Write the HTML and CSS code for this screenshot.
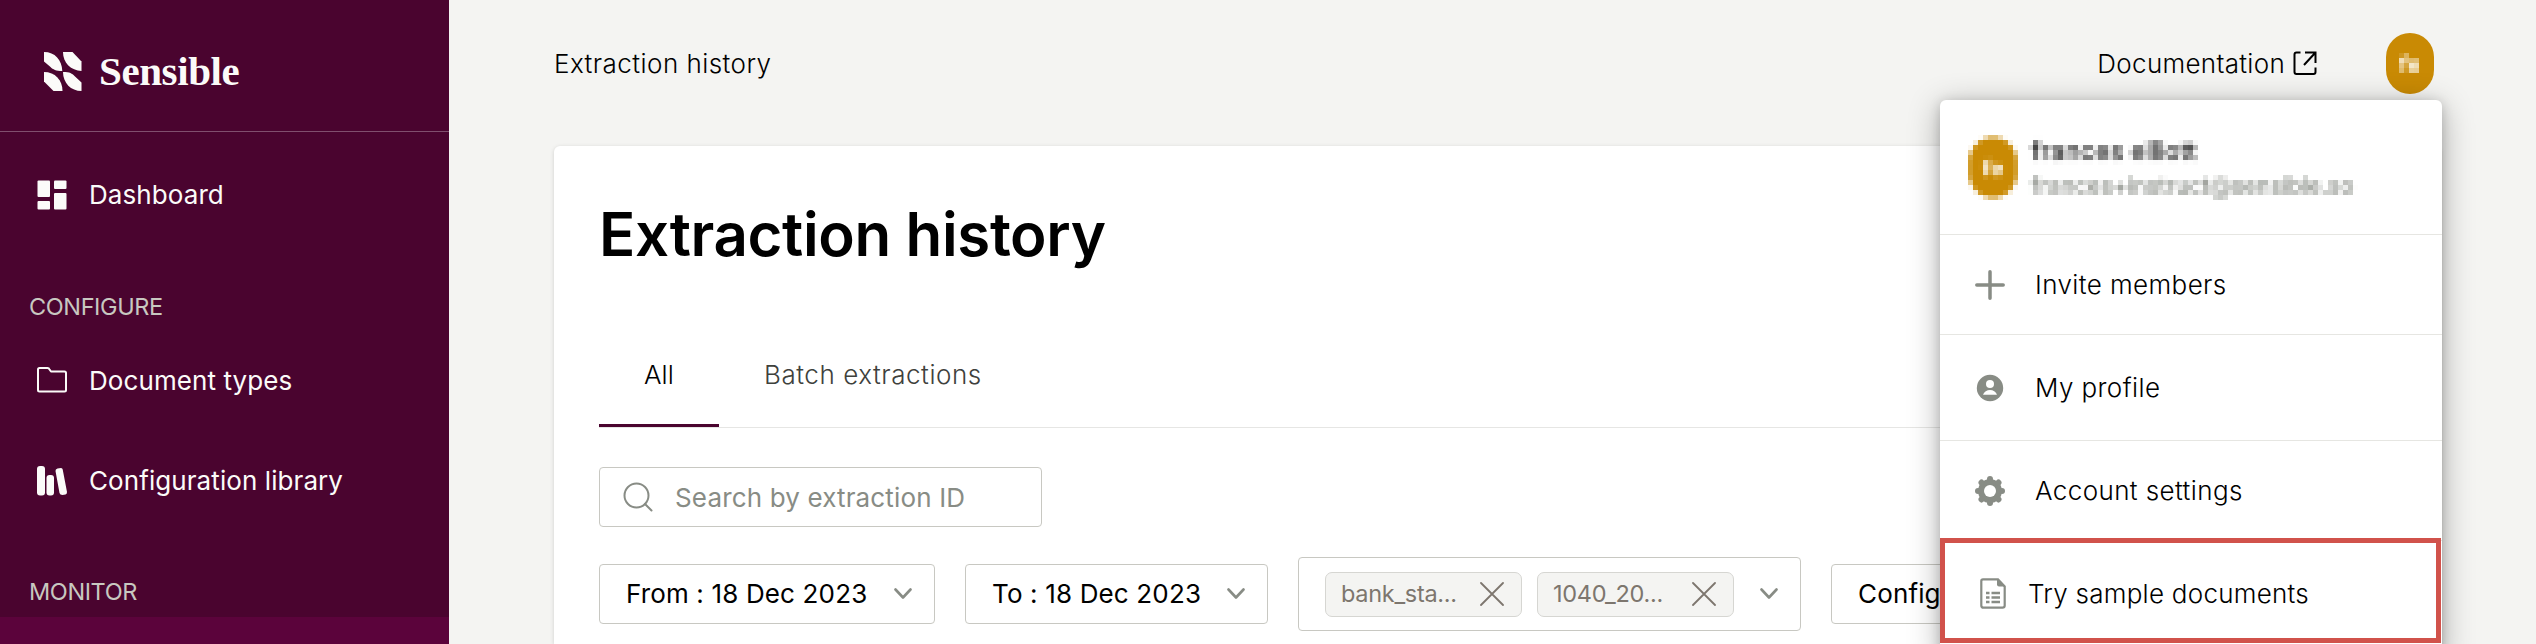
FILE: index.html
```html
<!DOCTYPE html>
<html lang="en">
<head>
<meta charset="utf-8">
<title>Extraction history</title>
<link rel="stylesheet" href="styles.css">
</head>
<body>
<svg class="defs" width="0" height="0" aria-hidden="true">
  <filter id="mosaic" x="0" y="0" width="100%" height="100%" color-interpolation-filters="sRGB">
    <feGaussianBlur in="SourceGraphic" stdDeviation="1.5" result="soft"/>
    <feFlood x="2" y="2" width="1" height="1" flood-color="#000"/>
    <feComposite width="5" height="5"/>
    <feTile result="grid"/>
    <feComposite in="soft" in2="grid" operator="in"/>
    <feMorphology operator="dilate" radius="2"/>
  </filter>
</svg>
<div class="app">
  <aside class="sidebar">
    <div class="brand">
      <svg class="brand-mark" width="38" height="39" viewBox="0 0 38 39" fill="#fbfbf9">
        <path d="M0 0C11 0 18 8 18.300 19C12 19 9 17.500 6.500 15L0 9.500Z"/>
        <path d="M19 0H28.500L37.500 9.500V19C27 18.500 19 11 19 0Z"/>
        <path d="M0 20C11 20 18.500 28 18.500 39H9.500L0 29.500Z"/>
        <path d="M19 20C26 20 28 21.500 30.500 24L37.500 30.500V39C27 39 19 31 19 20Z"/>
      </svg>
      <span class="brand-name">Sensible</span>
    </div>
    <nav class="nav">
      <a class="nav-item first">
        <svg width="30" height="30" viewBox="0 0 30 30" fill="#fbfbf9"><rect x=".5" y=".5" width="12.500" height="16.500" rx="1"/><rect x="17" y=".5" width="12.500" height="8.500" rx="1"/><rect x=".5" y="21" width="12.500" height="8.500" rx="1"/><rect x="17" y="13" width="12.500" height="16.500" rx="1"/></svg>
        <span>Dashboard</span>
      </a>
      <div class="nav-group configure">CONFIGURE</div>
      <a class="nav-item">
        <svg width="30" height="30" viewBox="0 0 30 30" fill="none" stroke="#fbfbf9" stroke-width="2" stroke-linejoin="round"><path d="M1 3.500Q1 2 2.500 2H10.500Q12 2 12.500 3.500L14 5.500H27.500Q29 5.500 29 7V24Q29 25.500 27.500 25.500H2.500Q1 25.500 1 24Z"/></svg>
        <span>Document types</span>
      </a>
      <a class="nav-item">
        <svg width="30" height="30" viewBox="0 0 30 30" fill="#fbfbf9"><rect x="0" y="0" width="8" height="29.500" rx="3"/><rect x="9.500" y="9" width="7.500" height="20.500" rx="3"/><path d="M20.500 2.500L24 2Q25.500 2 25.700 3.500L30 26Q30 28 28.500 28.500L25.500 29Q23 29 22.500 27L18.500 5Q18.300 3 20.500 2.500Z"/></svg>
        <span>Configuration library</span>
      </a>
      <div class="nav-group monitor">MONITOR</div>
      <div class="nav-active"></div>
    </nav>
  </aside>

  <main class="main">
    <header class="topbar">
      <span class="crumb">Extraction history</span>
      <a class="docs">Documentation</a>
      <svg class="ext" width="24" height="24" viewBox="0 0 24 24" fill="none" stroke="#000" stroke-width="2"><path d="M7.500 1.500H3.500Q1.500 1.500 1.500 3.500V21Q1.500 23 3.500 23H20.500Q22.500 23 22.500 21V16.500M12 1.500H22.500V12M22.500 1.500L11 14"/></svg>
      <div class="avatar"><span class="initials mosaic">fe</span></div>
    </header>
    <section class="card">
      <h1 class="title">Extraction history</h1>
      <div class="tabs">
        <div class="tab active">All</div>
        <div class="tab">Batch extractions</div>
      </div>
      <div class="search">
        <svg width="30" height="30" viewBox="0 0 30 30" fill="none" stroke="#888c85" stroke-width="2" stroke-linecap="round"><circle cx="13.500" cy="13.500" r="12"/><path d="M22 22L28.500 28.500"/></svg>
        <span>Search by extraction ID</span>
      </div>
      <div class="filters">
        <div class="select from"><span>From : 18 Dec 2023</span><svg class="chev" width="18" height="12" viewBox="0 0 18 12"><path d="M1.500 1.500L9 9.500L16.500 1.500"/></svg></div>
        <div class="select to"><span>To : 18 Dec 2023</span><svg class="chev" width="18" height="12" viewBox="0 0 18 12"><path d="M1.500 1.500L9 9.500L16.500 1.500"/></svg></div>
        <div class="select multi">
          <div class="chips">
            <div class="chip"><span>bank_sta...</span><svg class="close" width="24" height="24" viewBox="0 0 24 24"><path d="M1 1L23 23M23 1L1 23"/></svg></div>
            <div class="chip"><span>1040_20...</span><svg class="close" width="24" height="24" viewBox="0 0 24 24"><path d="M1 1L23 23M23 1L1 23"/></svg></div>
          </div>
          <svg class="chev" width="18" height="12" viewBox="0 0 18 12"><path d="M1.500 1.500L9 9.500L16.500 1.500"/></svg>
        </div>
        <div class="select config"><span>Configuration</span></div>
      </div>
    </section>
  </main>

  <div class="menu">
    <div class="profile">
      <div class="avatar-box mosaic"><div class="avatar small">fe</div></div>
      <div class="who">
        <div class="name mosaic">frances elliott</div>
        <div class="email mosaic">frances+instruct@sensible.so</div>
      </div>
    </div>
    <div class="menu-item invite">
      <svg width="30" height="30" viewBox="0 0 30 30" fill="none" stroke="#888c85" stroke-width="3.500" stroke-linecap="round"><path d="M15 1.800V28.200M1.800 15H28.200"/></svg>
      <span>Invite members</span>
    </div>
    <div class="menu-item me">
      <svg width="30" height="30" viewBox="0 0 30 30"><circle cx="15" cy="15" r="13.200" fill="#888c85"/><circle cx="15" cy="11" r="4" fill="#fff"/><path d="M8 21.800C9 18.500 12 17 15 17S21 18.500 22 21.800Z" fill="#fff"/></svg>
      <span>My profile</span>
    </div>
    <div class="menu-item">
      <svg width="30" height="30" viewBox="0 0 30 30"><g fill="#888c85"><circle cx="15" cy="15" r="12"/><g id="teeth"><circle cx="15" cy="3" r="3"/><circle cx="15" cy="27" r="3"/><circle cx="3" cy="15" r="3"/><circle cx="27" cy="15" r="3"/></g><use href="#teeth" transform="rotate(45 15 15)"/></g><circle cx="15" cy="15" r="6" fill="#fff"/></svg>
      <span>Account settings</span>
    </div>
    <div class="menu-item sample">
      <svg width="26" height="31" viewBox="0 0 26 31"><path d="M3 1.300H18L24.700 8.500V27.500Q24.700 29.700 22.500 29.700H3.500Q1.300 29.700 1.300 27.500V3Q1.300 1.300 3 1.300Z" fill="none" stroke="#888c85" stroke-width="2.200"/><path d="M17 1V6.500Q17 8.500 19 8.500H25Z" fill="#888c85"/><path d="M6 15H9.500M11.500 15H20M6 19.500H9.500M11.500 19.500H20M6 24H9.500M11.500 24H20" stroke="#888c85" stroke-width="2.500"/></svg>
      <span>Try sample documents</span>
    </div>
  </div>
</div>
</body>
</html>
```
FILE: styles.css
```css
* { box-sizing: border-box; }
body { margin: 0; font-family: Inter, "Liberation Sans", sans-serif; font-size: 26px; line-height: 32px; letter-spacing: .15px; color: #000; }
.defs { position: absolute; }
.app { position: relative; display: flex; width: 2536px; height: 644px; overflow: hidden; background: #f4f4f2; }
span, .tab, .title, .crumb, .docs { white-space: nowrap; }
svg { flex: none; display: block; }

.sidebar { width: 449px; flex: none; background: #4a042f; display: flex; flex-direction: column; }
.brand { height: 132px; flex: none; display: flex; align-items: flex-start; padding: 52px 0 0 44px; border-bottom: 1px solid #804f6e; }
.brand-name { margin-left: 17px; font-family: "Liberation Serif", serif; font-weight: 700; font-size: 41px; line-height: 38px; letter-spacing: -.4px; color: #fbfbf9; }
.nav { flex: 1; display: flex; flex-direction: column; }
.nav-item { height: 100px; flex: none; display: flex; align-items: center; padding-left: 37px; gap: 22px; letter-spacing: .08px; color: #fbfbf9; }
.nav-item.first { height: 126px; }
.nav-group { flex: none; padding-left: 29px; font-size: 23.5px; line-height: 30px; letter-spacing: -.4px; color: #c8c8c0; }
.configure { height: 73px; padding-top: 34px; }
.monitor { height: 86px; padding-top: 46px; }
.nav-active { flex: 1; background: #5b033b; }

.main { flex: 1; min-width: 0; padding: 0 95px 0 105px; display: flex; flex-direction: column; }
.topbar { height: 146px; flex: none; display: flex; align-items: flex-start; padding: 33px 7px 0 0; font-weight: 300; letter-spacing: .45px; }
.crumb { flex: 1; padding-top: 15px; }
.docs { padding-top: 15px; letter-spacing: .3px; }
.ext { margin: 18px 0 0 8px; }
.avatar { width: 48px; height: 61px; margin-left: 69px; border-radius: 24px; background: #c98a04; display: flex; align-items: center; justify-content: center; color: #fff; font-size: 22px; font-weight: 700; letter-spacing: 0; }
.mosaic { filter: url(#mosaic); }
.card { flex: 1; background: #fff; border-radius: 6px 6px 0 0; box-shadow: 0 1px 4px rgba(0,0,0,.15); padding: 52px 45px 0; }
.title { margin: 0; font-size: 60px; line-height: 72px; font-weight: 600; letter-spacing: -.36px; }
.tabs { margin-top: 53px; height: 105px; display: flex; border-bottom: 1px solid #e6e6e4; font-weight: 300; letter-spacing: .55px; }
.tab { height: 104px; padding: 36px 45px 0; color: #3e413c; }
.tab.active { width: 120px; color: #000; border-bottom: 3px solid #4a042f; letter-spacing: .1px; }
.search { margin-top: 39px; width: 443px; height: 60px; border: 1px solid #c8c8c2; border-radius: 4px; display: flex; align-items: center; padding-left: 23px; gap: 22px; color: #888c85; }
.search span { padding-top: 2px; }
.filters { margin-top: 30px; display: flex; align-items: center; gap: 30px; }
.select { flex: none; height: 60px; border: 1px solid #c8c8c2; border-radius: 4px; display: flex; align-items: center; justify-content: space-between; padding: 0 22px 0 26px; }
.from { width: 336px; }
.to { width: 303px; }
.multi { width: 503px; height: 74px; padding-left: 26px; }
.config { width: 300px; }
.chev { fill: none; stroke: #888c85; stroke-width: 2.600; stroke-linecap: round; stroke-linejoin: round; }
.chips { display: flex; gap: 15px; }
.chip { width: 197px; height: 45px; border: 1px solid #d6d6d2; border-radius: 7px; background: #f4f4f2; display: flex; align-items: center; justify-content: space-between; padding: 0 17px 0 15px; font-size: 23.5px; letter-spacing: -.3px; color: #7d766e; }
.close { fill: none; stroke: #7d766e; stroke-width: 1.800; stroke-linecap: round; }

.menu { position: absolute; left: 1940px; top: 100px; width: 502px; height: 560px; background: #fff; border-radius: 6px; box-shadow: 0 6px 32px rgba(0,0,0,.3), 0 2px 12px rgba(0,0,0,.16); font-weight: 300; letter-spacing: .4px; }
.profile { height: 135px; display: flex; align-items: flex-start; padding: 30px 0 0 23px; border-bottom: 1px solid #e6e6e2; letter-spacing: 0; }
.avatar-box { width: 60px; height: 80px; padding: 7px 6px; }
.avatar.small { margin: 0; width: 48px; height: 61px; }
.who { margin-left: 5px; }
.name, .email { height: 40px; padding: 5px 3px 0; white-space: nowrap; width: 350px; font-weight: 500; }
.name { color: #222; font-size: 25.5px; }
.email { color: #888c85; font-size: 22.5px; padding-top: 0; }
.menu-item { height: 100px; display: flex; align-items: center; padding-left: 35px; gap: 30px; border-bottom: 1px solid #e6e6e2; }
.menu-item.me { height: 106px; }
.menu-item.sample { width: 501px; height: 105px; margin-top: -3px; border: 5px solid #d1524b; gap: 22px; padding: 6px 0 0 35px; background: #fff; position: relative; letter-spacing: .25px; }
```
